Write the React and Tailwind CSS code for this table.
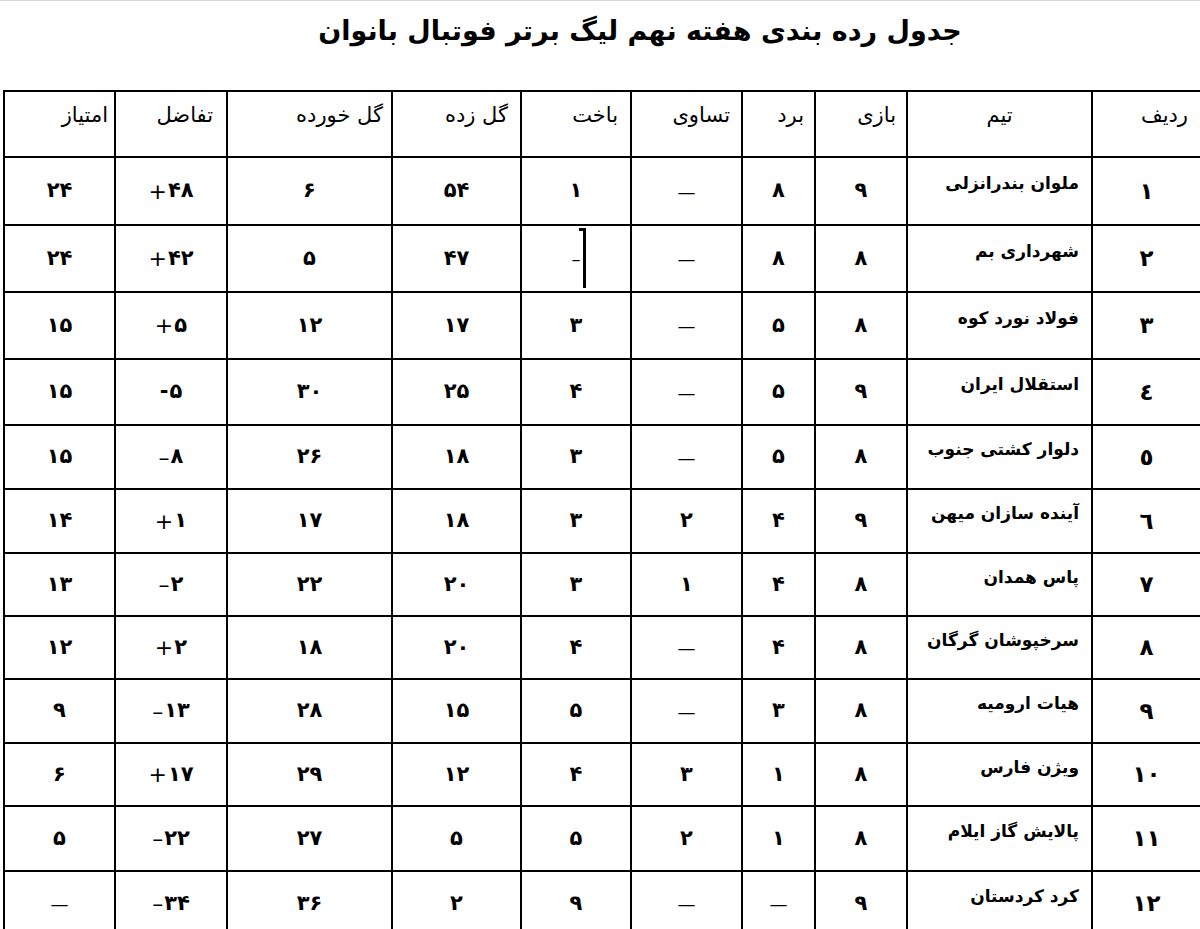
import React from "react";

const font = { fontFamily: '"DejaVu Sans", sans-serif' };

const headers = [
  { t: "ردیف", w: "w-[109px]", a: "text-right pr-[12px]" },
  { t: "تیم", w: "w-[185px]", a: "text-center" },
  { t: "بازی", w: "w-[92px]", a: "text-right pr-[10px]" },
  { t: "برد", w: "w-[73px]", a: "text-right pr-[10px]" },
  { t: "تساوی", w: "w-[111px]", a: "text-right pr-[11px]" },
  { t: "باخت", w: "w-[110px]", a: "text-right pr-[12px]" },
  { t: "گل زده", w: "w-[129px]", a: "text-right pr-[12px]" },
  { t: "گل خورده", w: "w-[165px]", a: "text-right pr-[8px]" },
  { t: "تفاضل", w: "w-[112px]", a: "text-right pr-[13px]" },
  { t: "امتیاز", w: "w-[111px]", a: "text-right pr-[6px]" },
];

const rows = [
  ["۱", "ملوان بندرانزلی", "۹", "۸", "—", "۱", "۵۴", "۶", "+۴۸", "۲۴"],
  ["۲", "شهرداری بم", "۸", "۸", "—", "CARET", "۴۷", "۵", "+۴۲", "۲۴"],
  ["۳", "فولاد نورد کوه", "۸", "۵", "—", "۳", "۱۷", "۱۲", "+۵", "۱۵"],
  ["٤", "استقلال ایران", "۹", "۵", "—", "۴", "۲۵", "۳۰", "-۵", "۱۵"],
  ["٥", "دلوار کشتی جنوب", "۸", "۵", "—", "۳", "۱۸", "۲۶", "–۸", "۱۵"],
  ["٦", "آینده سازان میهن", "۹", "۴", "۲", "۳", "۱۸", "۱۷", "+۱", "۱۴"],
  ["۷", "پاس همدان", "۸", "۴", "۱", "۳", "۲۰", "۲۲", "–۲", "۱۳"],
  ["۸", "سرخپوشان گرگان", "۸", "۴", "—", "۴", "۲۰", "۱۸", "+۲", "۱۲"],
  ["۹", "هیات ارومیه", "۸", "۳", "—", "۵", "۱۵", "۲۸", "–۱۳", "۹"],
  ["۱۰", "ویژن فارس", "۸", "۱", "۳", "۴", "۱۲", "۲۹", "+۱۷", "۶"],
  ["۱۱", "پالایش گاز ایلام", "۸", "۱", "۲", "۵", "۵", "۲۷", "–۲۲", "۵"],
  ["۱۲", "کرد کردستان", "۹", "—", "—", "۹", "۲", "۳۶", "–۳۴", "—"],
];

const heights = ["h-[68px]", "h-[67px]", "h-[67px]", "h-[66px]", "h-[64px]", "h-[64px]", "h-[63px]", "h-[63px]", "h-[64px]", "h-[63px]", "h-[65px]", "h-[65px]"];

function Cell({ v, i }) {
  if (i === 1) {
    return (
      <td className="border-2 border-black text-right pr-[12px] pb-[14px] align-middle text-[17px] font-bold">
        {v}
      </td>
    );
  }
  if (v === "CARET") {
    return (
      <td className="border-2 border-black text-center align-middle relative">
        <span className="text-[18px] font-normal">–</span>
        <div className="absolute left-[61px] top-[2px] w-[3px] h-[60px] bg-black"></div>
        <div className="absolute left-[57px] top-[2px] w-[6px] h-[3px] bg-black"></div>
      </td>
    );
  }
  if (v === "—") {
    return (
      <td className="border-2 border-black text-center align-middle text-[18px] font-normal">
        {v}
      </td>
    );
  }
  if (i === 8) {
    // sign sits on the left of the digits
    const sign = v[0];
    const num = v.slice(1);
    return (
      <td className="border-2 border-black text-center align-middle font-bold text-[21px]">
        <span className="inline-flex flex-row-reverse items-center gap-[1px]">
          <span className={sign === "-" ? "font-bold" : "font-normal text-[22px]"}>{sign}</span>
          <span>{num}</span>
        </span>
      </td>
    );
  }
  return (
    <td className={`border-2 border-black text-center align-middle font-bold ${i === 0 ? "text-[23px]" : "text-[21px]"}`}>
      {v}
    </td>
  );
}

export default function App() {
  return (
    <div className="w-[1200px] h-[929px] overflow-hidden bg-white text-black" style={font} dir="rtl">
      <div className="h-[90px] border-t border-gray-300 flex justify-center pl-[80px] pt-[10px]">
        <h1 className="text-[27px] font-bold">جدول رده بندی هفته نهم لیگ برتر فوتبال بانوان</h1>
      </div>
      <table className="table-fixed border-collapse w-[1197px] mr-[-2px]">
        <colgroup>
          {headers.map((h, i) => (
            <col key={i} className={h.w} />
          ))}
        </colgroup>
        <thead>
          <tr className="h-[66px]">
            {headers.map((h, i) => (
              <th key={i} className={`border-2 border-black font-normal text-[21px] align-top pt-[8px] ${h.a}`}>
                {h.t}
              </th>
            ))}
          </tr>
        </thead>
        <tbody>
          {rows.map((r, ri) => (
            <tr key={ri} className={heights[ri]}>
              {r.map((v, i) => (
                <Cell key={i} v={v} i={i} />
              ))}
            </tr>
          ))}
        </tbody>
      </table>
    </div>
  );
}
